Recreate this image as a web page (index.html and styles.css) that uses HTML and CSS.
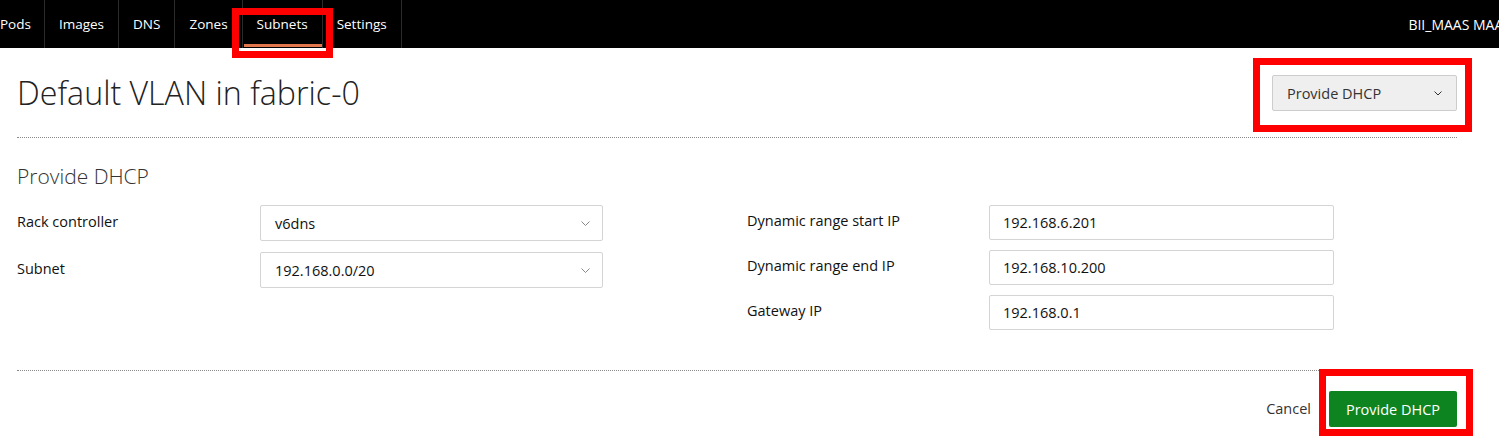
FILE: index.html
```html
<!DOCTYPE html>
<html>
<head>
<meta charset="utf-8">
<link rel="stylesheet" href="styles.css">
</head>
<body>
<header class="nav">
  <ul class="nav-list">
    <li class="nav-item first">Pods</li>
    <li class="nav-item">Images</li>
    <li class="nav-item">DNS</li>
    <li class="nav-item">Zones</li>
    <li class="nav-item active">Subnets<span class="mark mark-nav"></span></li>
    <li class="nav-item">Settings</li>
  </ul>
  <div class="nav-right">BII_MAAS MAAS</div>
</header>

<main class="content">
  <div class="title-row">
    <h1 class="title">Default VLAN in fabric-0</h1>
    <div class="take-action">
      <button class="action-btn">Provide DHCP
        <svg class="chev" width="8" height="5" viewBox="0 0 8 5"><polyline points="0.5,0.5 4,4 7.5,0.5" fill="none" stroke="#333" stroke-width="1"/></svg>
      </button>
      <span class="mark mark-action"></span>
    </div>
  </div>

  <section class="dhcp">
    <h2 class="subtitle">Provide DHCP</h2>
    <div class="form">
      <div class="col col-left">
        <div class="row row-select">
          <label class="label label-left">Rack controller</label>
          <div class="select">v6dns
            <svg class="chev-light" width="9" height="5" viewBox="0 0 9 5"><polyline points="0.5,0.5 4.5,4.5 8.5,0.5" fill="none" stroke="#888" stroke-width="1"/></svg>
          </div>
        </div>
        <div class="row row-select">
          <label class="label label-left">Subnet</label>
          <div class="select">192.168.0.0/20
            <svg class="chev-light" width="9" height="5" viewBox="0 0 9 5"><polyline points="0.5,0.5 4.5,4.5 8.5,0.5" fill="none" stroke="#888" stroke-width="1"/></svg>
          </div>
        </div>
      </div>
      <div class="col col-right">
        <div class="row row-input">
          <label class="label label-right">Dynamic range start IP</label>
          <div class="input">192.168.6.201</div>
        </div>
        <div class="row row-input">
          <label class="label label-right">Dynamic range end IP</label>
          <div class="input">192.168.10.200</div>
        </div>
        <div class="row row-input">
          <label class="label label-right">Gateway IP</label>
          <div class="input">192.168.0.1</div>
        </div>
      </div>
    </div>
  </section>

  <div class="actions">
    <span class="cancel">Cancel</span>
    <div class="submit-wrap">
      <button class="submit">Provide DHCP</button>
      <span class="mark mark-submit"></span>
    </div>
  </div>
</main>
</body>
</html>
```

FILE: styles.css
```css
html, body {
  margin: 0;
  padding: 0;
  overflow: hidden;
  background: #fff;
}
body {
  font-family: "Open Sans", "Noto Sans", sans-serif;
  color: #333;
  width: 1499px;
  height: 445px;
}
.nav {
  display: flex;
  height: 48px;
  background: #000;
  color: #fff;
  font-size: 13.5px;
  align-items: stretch;
}
.nav-list {
  display: flex;
  list-style: none;
  margin: 0;
  padding: 0;
}
.nav-item {
  position: relative;
  display: flex;
  align-items: center;
  padding: 0 14px 0 14px;
  border-right: 1px solid #2b2b2b;
}
.nav-item.first {
  padding-left: 0;
  padding-right: 13px;
}
.nav-item.active {
  font-weight: 500;
}
.nav-item.active::after {
  content: "";
  position: absolute;
  left: 1px;
  right: 0;
  bottom: 1px;
  height: 3px;
  background: #e2764c;
}
.nav-right {
  margin-left: auto;
  margin-right: -12px;
  display: flex;
  align-items: center;
  font-size: 14px;
  white-space: nowrap;
}
.mark {
  position: absolute;
  border: 7px solid #f00;
  box-sizing: border-box;
  pointer-events: none;
}
.mark-nav {
  left: -11px;
  top: 8px;
  width: 101px;
  height: 50px;
  z-index: 2;
}
.content {
  width: 1440px;
  margin-left: 17px;
}
.title-row {
  display: flex;
  justify-content: space-between;
  align-items: center;
  padding: 27px 0 26px 0;
  border-bottom: 1px dotted #8a8a8a;
}
.title {
  margin: 0;
  font-size: 32.2px;
  font-weight: 300;
  color: #222;
  line-height: 36px;
}
.take-action {
  position: relative;
}
.action-btn {
  display: flex;
  align-items: center;
  justify-content: space-between;
  width: 185px;
  height: 36px;
  padding: 0 14px 0 14px;
  background: #efefef;
  border: 1px solid #cdcdcd;
  border-radius: 2px;
  font-family: inherit;
  font-size: 14.5px;
  color: #333;
}
.mark-action {
  left: -19px;
  top: -17px;
  width: 219px;
  height: 74px;
}
.dhcp {
  padding: 25px 0 0 0;
  height: 233px;
  border-bottom: 1px dotted #8a8a8a;
  box-sizing: border-box;
}
.subtitle {
  margin: 0 0 16px 0;
  font-size: 21px;
  font-weight: 300;
  color: #333;
  line-height: 26px;
}
.form {
  display: flex;
}
.col {
  display: flex;
  flex-direction: column;
}
.col-left {
  gap: 11px;
  width: 730px;
}
.col-right {
  gap: 10px;
}
.row {
  display: flex;
  align-items: center;
}
.label {
  font-size: 14.5px;
  color: #111;
  padding-bottom: 4px;
}
.label-left {
  width: 243px;
}
.label-right {
  width: 242px;
}
.select {
  display: flex;
  align-items: center;
  justify-content: space-between;
  box-sizing: border-box;
  width: 343px;
  height: 36px;
  padding: 0 12px 0 14px;
  border: 1px solid #d4d4d4;
  border-radius: 2px;
  font-size: 14.5px;
  color: #111;
}
.input {
  display: flex;
  align-items: center;
  box-sizing: border-box;
  width: 345px;
  height: 35px;
  padding: 0 13px;
  border: 1px solid #d4d4d4;
  border-radius: 2px;
  font-size: 14.5px;
  color: #111;
}
.actions {
  display: flex;
  justify-content: flex-end;
  align-items: center;
  gap: 18px;
  padding-top: 20px;
}
.cancel {
  font-size: 14.5px;
  color: #333;
  padding-bottom: 2px;
}
.submit-wrap {
  position: relative;
}
.submit {
  display: block;
  width: 128px;
  height: 36px;
  background: #0e8420;
  border: 0;
  border-radius: 2px;
  color: #fff;
  font-family: inherit;
  font-size: 14.5px;
}
.mark-submit {
  left: -10px;
  top: -22px;
  width: 154px;
  height: 67px;
}
```
